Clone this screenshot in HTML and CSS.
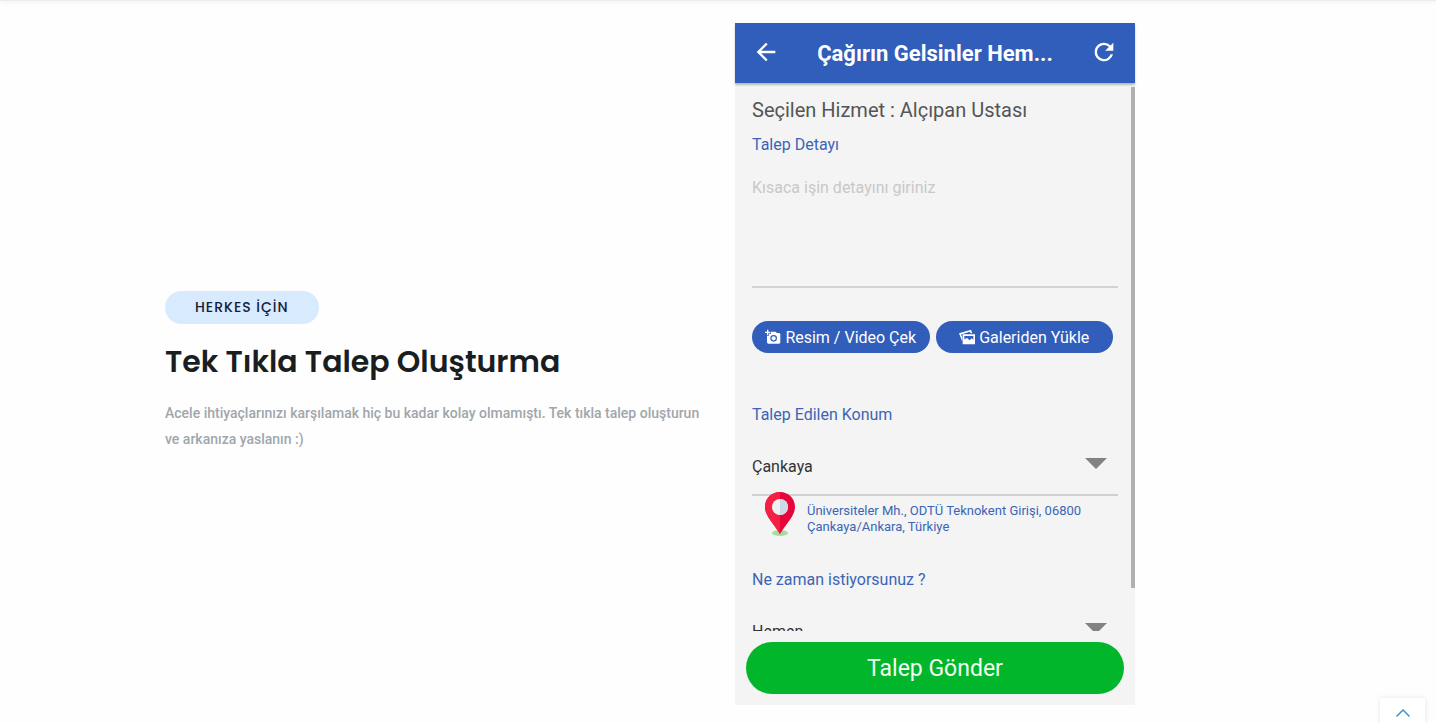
FILE: index.html
```
<!DOCTYPE html>
<html lang="tr">
<head>
    <meta charset="UTF-8">
    <meta name="viewport" content="width=device-width, initial-scale=1.0">
    <title>Tek Tıkla Talep Oluşturma</title>
    <link rel="stylesheet" href="styles.css">
</head>
<body>

<div class="top-shadow"></div>

<section class="feature">
    <div class="feature-text">
        <span class="badge">HERKES İÇİN</span>
        <h2>Tek Tıkla Talep Oluşturma</h2>
        <p>Acele ihtiyaçlarınızı karşılamak hiç bu kadar kolay olmamıştı. Tek tıkla talep oluşturun ve arkanıza yaslanın :)</p>
    </div>

    <div class="phone">
        <header class="app-bar">
            <button type="button" class="icon-btn" aria-label="Geri">
                <svg width="28" height="28" viewBox="0 0 24 24" fill="currentColor"><path d="M20 11H7.830l5.590-5.590L12 4l-8 8 8 8 1.410-1.410L7.830 13H20v-2z"/></svg>
            </button>
            <h3>Çağırın Gelsinler Hem...</h3>
            <button type="button" class="icon-btn" aria-label="Yenile">
                <svg width="28" height="28" viewBox="0 0 24 24" fill="currentColor"><path d="M17.650 6.350A7.960 7.960 0 0 0 12 4a8 8 0 1 0 7.730 10h-2.080A6 6 0 1 1 12 6c1.660 0 3.140.69 4.220 1.780L13 11h7V4l-2.350 2.350z"/></svg>
            </button>
        </header>

        <!-- Request form -->
        <form class="screen">
            <h4>Seçilen Hizmet : Alçıpan Ustası</h4>
            <label for="detail">Talep Detayı</label>
            <textarea id="detail" placeholder="Kısaca işin detayını giriniz"></textarea>

            <div class="uploads">
                <button type="button">
                    <svg width="16" height="16" viewBox="0 0 24 24" fill="currentColor"><path fill-rule="evenodd" d="M3 4V1h2v3h3v2H5v3H3V6H0V4h3zm3 6V7h3V4h7l1.830 2H21c1.100 0 2 .9 2 2v12c0 1.100-.9 2-2 2H5c-1.100 0-2-.9-2-2V10h3zm7 9a5 5 0 1 0 0-10 5 5 0 0 0 0 10zm-3.200-5a3.200 3.200 0 1 0 6.400 0 3.200 3.200 0 0 0-6.400 0z"/></svg>
                    Resim / Video Çek
                </button>
                <button type="button">
                    <svg width="16" height="16" viewBox="0 0 24 24" fill="currentColor"><path d="M0 6.500 18 1l2 5.500h-2.800L16.500 4 3 8.200l2 4V19z"/><path fill-rule="evenodd" d="M5.500 8H24v15H5.500zM8 10.500v5l4-2 4 3.500 3-3 2.500 2v-5.500z"/></svg>
                    Galeriden Yükle
                </button>
            </div>

            <label for="place" class="spaced">Talep Edilen Konum</label>
            <div class="select-box">
                <select id="place">
                    <option>Çankaya</option>
                </select>
            </div>

            <div class="address">
                <svg width="32" height="46" viewBox="0 0 32 46">
                    <ellipse cx="16" cy="42" rx="8" ry="3" fill="#a5dc9b"/>
                    <path d="M16 1C7.500 1 1 7.500 1 16c0 9 9 17 15 27 6-10 15-18 15-27C31 7.500 24.500 1 16 1z" fill="#e6063a"/>
                    <path d="M16 1C7.500 1 1 7.500 1 16c0 9 9 17 15 27z" fill="#f52145"/>
                    <circle cx="16" cy="16" r="8" fill="#edf1f4"/>
                    <path d="M16 8a8 8 0 0 1 0 16z" fill="#cdd9e4"/>
                </svg>
                <span>Üniversiteler Mh., ODTÜ Teknokent Girişi, 06800 Çankaya/Ankara, Türkiye</span>
            </div>

            <label for="when">Ne zaman istiyorsunuz ?</label>
            <div class="select-box">
                <select id="when">
                    <option>Hemen</option>
                </select>
            </div>
            <div class="scroll-thumb"></div>
        </form>

        <footer class="send">
            <button type="button">Talep Gönder</button>
        </footer>
    </div>
</section>

<button type="button" class="to-top" aria-label="Yukarı">
    <svg width="14" height="8" viewBox="0 0 14 8" fill="none" stroke="#3f95c9" stroke-width="1.500"><path d="M0.500 7.500 7 1l6.500 6.500"/></svg>
</button>

</body>
</html>
```

FILE: styles.css
```
* {
    box-sizing: border-box;
}
body {
    margin: 0;
    background: #fefefe;
    font-family: Roboto, sans-serif;
    overflow-x: hidden;
}
button, select, textarea {
    font-family: inherit;
    border: none;
    margin: 0;
}
button {
    cursor: pointer;
}
svg {
    display: block;
    flex: none;
}
.top-shadow {
    height: 1px;
    background: #ececec;
    box-shadow: 0 0 5px rgba(0, 0, 0, 0.2);
}
.feature {
    display: grid;
    grid-template-columns: minmax(0, 540px) minmax(0, 1fr);
    gap: 30px;
    align-items: center;
    max-width: 1146px;
    margin: 0 auto;
    padding: 22px 20px 18px;
}
.feature-text {
    padding-top: 14px;
}
.badge {
    display: inline-block;
    padding: 0 30px;
    border-radius: 17px;
    background: #d8eafe;
    color: #14203a;
    font-family: Poppins, Inter, sans-serif;
    font-size: 14px;
    font-weight: 500;
    line-height: 33px;
    letter-spacing: 1px;
}
h2 {
    margin: 15px 0;
    color: #1b1e21;
    font-family: Poppins, Inter, sans-serif;
    font-size: 30px;
    font-weight: 600;
    line-height: 46px;
}
.feature-text p {
    margin: 0;
    color: #a0a6ac;
    font-size: 14px;
    font-weight: 500;
    line-height: 26px;
}

/* App screen */
.phone {
    width: 100%;
    max-width: 400px;
    background: #f4f4f4;
}
.app-bar {
    position: relative;
    z-index: 1;
    display: flex;
    align-items: center;
    justify-content: space-between;
    height: 60px;
    padding: 0 17px;
    background: #315dbb;
    color: #fff;
    box-shadow: 0 2px 2px rgba(0, 0, 0, 0.25);
}
.app-bar h3 {
    margin: 0;
    font-size: 22px;
    font-weight: 700;
}
.icon-btn {
    padding: 0 0 2px;
    background: none;
    color: #fff;
}
.screen {
    position: relative;
    height: 548px;
    padding: 14px 17px 0;
    overflow: hidden;
}
.screen h4 {
    margin: 0 0 10px;
    color: #555;
    font-size: 20px;
    font-weight: 400;
    line-height: 26px;
}
.screen label {
    display: block;
    color: #3b65b5;
    font-size: 16px;
    line-height: 24px;
}
.screen textarea {
    display: block;
    width: 100%;
    height: 131px;
    padding: 19px 0;
    border-bottom: 2px solid #d3d3d3;
    background: none;
    font-size: 16px;
    line-height: 24px;
    resize: none;
}
.screen textarea::placeholder {
    color: #c8c8c8;
}
.uploads {
    display: grid;
    grid-template-columns: 1fr 1fr;
    gap: 6px;
    margin-top: 33px;
    padding-right: 5px;
}
.uploads button {
    display: flex;
    align-items: center;
    justify-content: center;
    gap: 4px;
    height: 32px;
    padding: 0;
    border-radius: 16px;
    background: #315dbb;
    color: #fff;
    font-size: 16px;
}
.screen .spaced {
    margin-top: 50px;
}
.select-box {
    position: relative;
    margin-top: 12px;
    border-bottom: 2px solid #d0d0d0;
}
.select-box::after {
    content: "";
    position: absolute;
    top: 19px;
    right: 11px;
    border: 11px solid transparent;
    border-top-color: #828282;
    border-bottom: none;
    pointer-events: none;
}
.select-box select {
    display: block;
    width: 100%;
    height: 55px;
    padding: 0;
    appearance: none;
    background: none;
    color: #333;
    font-size: 16px;
}
.address {
    display: flex;
    gap: 11px;
    position: relative;
    margin: -5px 0 31px;
    padding: 0 12px;
    color: #3b65b5;
    font-size: 13px;
    line-height: 16px;
}
.address span {
    padding-top: 12px;
}
.scroll-thumb {
    position: absolute;
    top: 4px;
    right: 0;
    width: 4px;
    height: 501px;
    background: #b0b0b0;
}
.send {
    padding: 11px;
}
.send button {
    width: 100%;
    height: 52px;
    border-radius: 26px;
    background: #02b62c;
    color: #f0fff0;
    font-size: 23px;
}

.to-top {
    position: fixed;
    right: 11px;
    bottom: -20px;
    display: flex;
    justify-content: center;
    width: 45px;
    height: 45px;
    padding: 11px 0;
    background: #fff;
    box-shadow: 0 0 5px rgba(0, 0, 0, 0.1);
}
```
